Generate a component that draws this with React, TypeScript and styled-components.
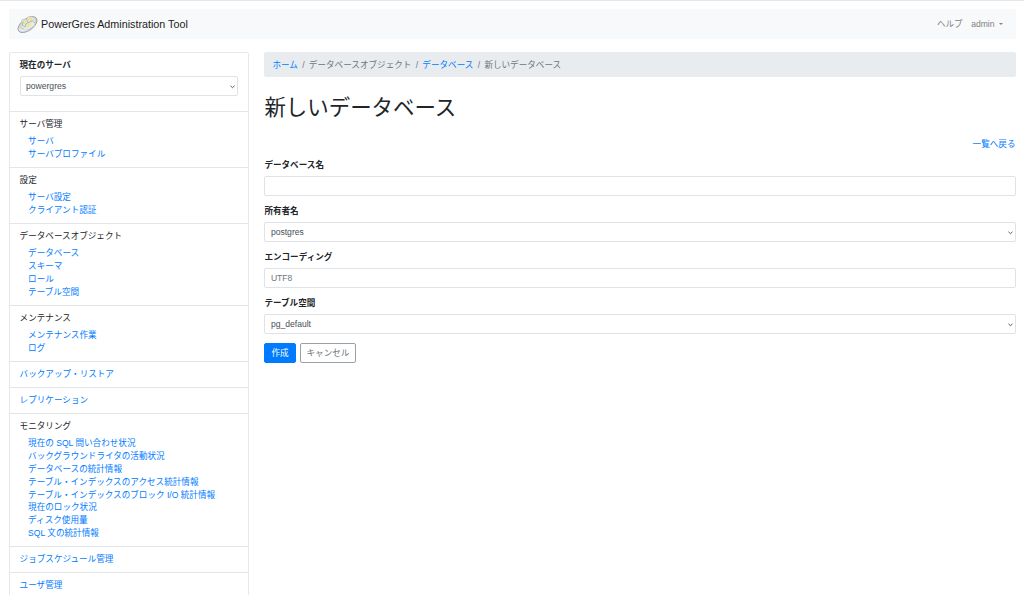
import React from 'react';
import styled, { createGlobalStyle } from 'styled-components';

const Global = createGlobalStyle`
  *, *::before, *::after { box-sizing: border-box; }
  html { overflow: hidden; }
  body {
    margin: 0;
    background: #fff;
    color: #212529;
    font-family: "Liberation Sans", "Noto Sans CJK JP", sans-serif;
    font-size: 8.58px;
    line-height: 12.8px;
  }
  ul, ol { list-style: none; margin: 0; padding: 0; }
`;

const Page = styled.div`
  height: 595px;
  overflow: hidden;
  border-top: 1px solid #e6e7e9;
  padding: 8px 8.5px 0 9px;
`;

const Navbar = styled.header`
  display: flex;
  align-items: center;
  height: 30px;
  padding: 0 12.5px 0 8px;
  background: #f8f9fa;
`;

const Brand = styled.div`
  display: flex;
  align-items: center;
  gap: 3px;
  font-size: 10.75px;
  line-height: 16px;
  color: #1b1c1d;
  flex: 1;
  svg { display: block; }
`;

const NavItem = styled.a`
  display: flex;
  align-items: center;
  margin-left: 8.5px;
  color: #808182;
`;

const Caret = styled.span`
  margin: 1px 0 0 4.5px;
  border: 2.5px solid transparent;
  border-top-color: currentColor;
  border-bottom: 0;
`;

const Columns = styled.div`
  display: flex;
  align-items: flex-start;
  gap: 15.4px;
  margin-top: 13px;
`;

const Sidebar = styled.nav`
  width: 240px;
  flex: none;
  border: 1px solid #e7e8e9;
  border-radius: 2px;
`;

const ServerBox = styled.div`
  height: 59px;
  padding: 6px 10.5px 0 9.5px;
  border-bottom: 1px solid #e4e5e6;
`;

const Section = styled.section`
  padding: 6.1px 9.6px 6.3px;
  border-bottom: 1px solid #e4e5e6;
`;

const SubList = styled.ul`
  margin-top: 4.3px;
  padding-left: 8.5px;
`;

const SubItem = styled.li`
  height: 12.8px;
  white-space: nowrap;
`;

const Link = styled.a`
  color: #007bff;
  text-decoration: none;
`;

const Main = styled.main`
  flex: 1;
  min-width: 0;
`;

const Breadcrumb = styled.ol`
  display: flex;
  align-items: center;
  height: 25.3px;
  padding: 1px 8px 0;
  border-radius: 2px;
  background: #e9ecef;
  color: #6c757d;
`;

const Crumb = styled.li`
  & + &::before {
    content: "/";
    padding: 0 4.3px;
  }
`;

const Title = styled.h1`
  margin: 18px 0 0;
  font-size: 21.45px;
  font-weight: 400;
  line-height: 26px;
`;

const BackRow = styled.div`
  margin-top: 16.8px;
  text-align: right;
`;

const Form = styled.form`
  margin-top: 8px;
`;

const FormGroup = styled.div`
  margin-bottom: 8.8px;
`;

const Label = styled.label`
  display: block;
  height: 12.8px;
  margin-bottom: 4.5px;
  font-weight: 700;
`;

const Control = styled.input`
  display: block;
  width: 100%;
  height: 20px;
  margin: 0;
  padding: 0 5.5px;
  border: 1px solid #dfe2e6;
  border-radius: 2px;
  background: #fff;
  color: #495057;
  font: inherit;
  outline: none;
  appearance: none;
  &::placeholder { color: #6c757d; opacity: 1; }
`;

const SelectWrap = styled.div`
  position: relative;
  svg {
    position: absolute;
    right: 3px;
    top: 8.5px;
  }
`;

const Actions = styled.div`
  display: flex;
  gap: 4px;
`;

const Button = styled.button<{ $primary?: boolean }>`
  height: 20px;
  padding: 0 6px;
  border: 1px solid ${(p) => (p.$primary ? '#007bff' : '#9aa1a7')};
  border-radius: 2px;
  background: ${(p) => (p.$primary ? '#007bff' : '#fff')};
  color: ${(p) => (p.$primary ? '#fff' : '#6c757d')};
  font: inherit;
`;

const Logo = () => (
  <svg width="21" height="19" viewBox="0 0 21 19">
    <ellipse cx="10.5" cy="9.6" rx="10.9" ry="5.9" transform="rotate(-36 10.5 9.6)" fill="#dcdee2" stroke="#9c9ea4" strokeWidth=".9" />
    <path d="M4 9.3 5.3 4.6 9.5 4l2-2.4 5 .6 2.6 3-1.5 5.4-5 3.4-5.1.6-3.2-2z" fill="#e6ecdf" stroke="#b3b7b5" strokeWidth=".6" />
    <path d="m5.5 5.3 3.4-.2.6 2.7-2.8 1.9-2-1.6z" fill="#f2e19a" />
    <path d="m12 2.5 3 .1.9 2.6-2.6 1.5-2.2-1.5z" fill="#f2df94" />
    <path d="m9.6 8.6 3.5-.8 1.6 2.2-3 2.9-2.7-1z" fill="#f0e3a6" />
    <path d="m9.5 4 1.6 3.6-2.2 1.2-1 3.4m3.2-4.6 4.7-1.8 2 2.2M6 6.4l-.6 3.8 2.5 1.6" fill="none" stroke="#9dbccb" strokeWidth="1" />
    <path d="m16.2 4.2 1.4 1.2-.6 2.2-1.5-1z" fill="#c5dccb" />
    <path d="M1.7 14.4c3.6 2.6 10-.4 14-4.8" fill="none" stroke="#f2f3f6" strokeWidth="1" />
  </svg>
);

const Select = ({ value }: { value: string }) => (
  <SelectWrap>
    <Control as="select" defaultValue={value}>
      <option>{value}</option>
    </Control>
    <svg width="5" height="4" viewBox="0 0 5 4">
      <path d="m.5.8 2 1.9 2-1.9" fill="none" stroke="#53585e" strokeWidth="1" />
    </svg>
  </SelectWrap>
);

type Entry = { title: string; items?: string[] };

const menu: Entry[] = [
  { title: 'サーバ管理', items: ['サーバ', 'サーバプロファイル'] },
  { title: '設定', items: ['サーバ設定', 'クライアント認証'] },
  { title: 'データベースオブジェクト', items: ['データベース', 'スキーマ', 'ロール', 'テーブル空間'] },
  { title: 'メンテナンス', items: ['メンテナンス作業', 'ログ'] },
  { title: 'バックアップ・リストア' },
  { title: 'レプリケーション' },
  {
    title: 'モニタリング',
    items: [
      '現在の SQL 問い合わせ状況',
      'バックグラウンドライタの活動状況',
      'データベースの統計情報',
      'テーブル・インデックスのアクセス統計情報',
      'テーブル・インデックスのブロック I/O 統計情報',
      '現在のロック状況',
      'ディスク使用量',
      'SQL 文の統計情報',
    ],
  },
  { title: 'ジョブスケジュール管理' },
  { title: 'ユーザ管理' },
];

export default function App() {
  return (
    <Page lang="ja">
      <Global />
      <Navbar>
        <Brand>
          <Logo />
          PowerGres Administration Tool
        </Brand>
        <NavItem>ヘルプ</NavItem>
        <NavItem>
          admin
          <Caret />
        </NavItem>
      </Navbar>
      <Columns>
        <Sidebar>
          <ServerBox>
            <Label>現在のサーバ</Label>
            <Select value="powergres" />
          </ServerBox>
          {menu.map((entry) => (
            <Section key={entry.title}>
              {entry.items ? <div>{entry.title}</div> : <div><Link>{entry.title}</Link></div>}
              {entry.items && (
                <SubList>
                  {entry.items.map((item) => (
                    <SubItem key={item}>
                      <Link>{item}</Link>
                    </SubItem>
                  ))}
                </SubList>
              )}
            </Section>
          ))}
        </Sidebar>
        <Main>
          <Breadcrumb>
            <Crumb><Link>ホーム</Link></Crumb>
            <Crumb>データベースオブジェクト</Crumb>
            <Crumb><Link>データベース</Link></Crumb>
            <Crumb>新しいデータベース</Crumb>
          </Breadcrumb>
          <Title>新しいデータベース</Title>
          <BackRow><Link>一覧へ戻る</Link></BackRow>
          <Form>
            <FormGroup>
              <Label>データベース名</Label>
              <Control />
            </FormGroup>
            <FormGroup>
              <Label>所有者名</Label>
              <Select value="postgres" />
            </FormGroup>
            <FormGroup>
              <Label>エンコーディング</Label>
              <Control placeholder="UTF8" />
            </FormGroup>
            <FormGroup>
              <Label>テーブル空間</Label>
              <Select value="pg_default" />
            </FormGroup>
            <Actions>
              <Button type="button" $primary>作成</Button>
              <Button type="button">キャンセル</Button>
            </Actions>
          </Form>
        </Main>
      </Columns>
    </Page>
  );
}
